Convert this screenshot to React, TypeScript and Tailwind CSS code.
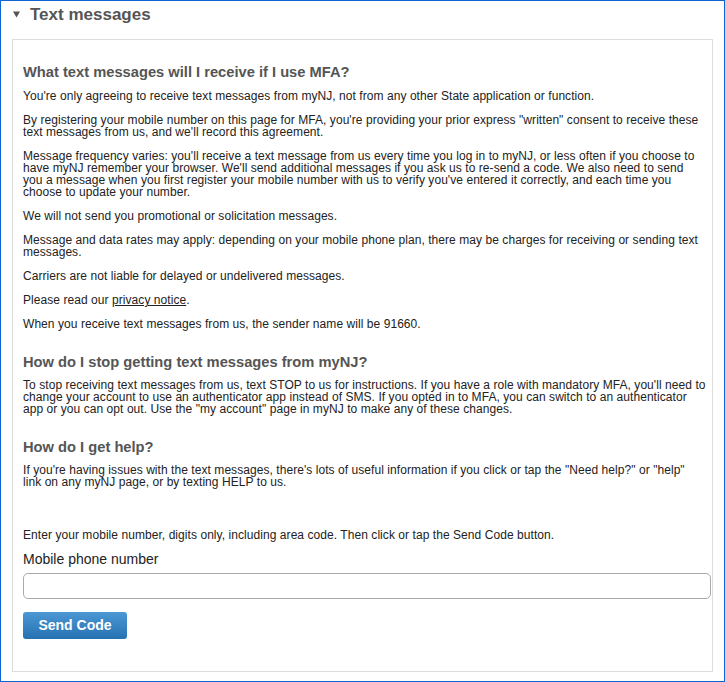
export default function App() {
    const para = 'mb-[12px] text-[12px] leading-[12px] tracking-[0.06px] text-[#222]';
    const heading = 'text-[14.7px] leading-[18px] font-bold text-[#555]';

    return (
        <div
            className="w-[725px] h-[682px] border border-[#0b63d4] bg-white"
            style={{ fontFamily: '"Liberation Sans", Arial, sans-serif' }}
        >
            {/* Section title */}
            <div className="flex items-center h-[27px] pl-[12px] pt-[1px]">
                <svg width="7" height="7" viewBox="0 0 7 7" className="mr-[10px] mb-[2px]">
                    <path d="M0 0.5 L7 0.5 L3.5 6.5 Z" fill="#555" />
                </svg>
                <h2 className="text-[17px] font-bold text-[#555]">Text messages</h2>
            </div>

            {/* Content box */}
            <div className="mx-[11px] mt-[11px] border border-[#ddd] pl-[10px] pr-[6px] pt-[23px] pb-[32px]">
                <h3 className={`${heading} mb-[9px]`}>What text messages will I receive if I use MFA?</h3>
                <p className={para}>
                    You're only agreeing to receive text messages from myNJ, not from any other State application or function.
                </p>
                <p className={para}>
                    By registering your mobile number on this page for MFA, you're providing your prior express "written" consent to receive these text messages from us, and we'll record this agreement.
                </p>
                <p className={para}>
                    Message frequency varies: you'll receive a text message from us every time you log in to myNJ, or less often if you choose to have myNJ remember your browser. We'll send additional messages if you ask us to re-send a code. We also need to send you a message when you first register your mobile number with us to verify you've entered it correctly, and each time you choose to update your number.
                </p>
                <p className={para}>We will not send you promotional or solicitation messages.</p>
                <p className={para}>
                    Message and data rates may apply: depending on your mobile phone plan, there may be charges for receiving or sending text messages.
                </p>
                <p className={para}>Carriers are not liable for delayed or undelivered messages.</p>
                <p className={para}>
                    Please read our <a className="underline text-[#222]">privacy notice</a>.
                </p>
                <p className={para}>When you receive text messages from us, the sender name will be 91660.</p>

                <h3 className={`${heading} mt-[23px] mb-[8px]`}>How do I stop getting text messages from myNJ?</h3>
                <p className={para}>
                    To stop receiving text messages from us, text STOP to us for instructions. If you have a role with mandatory MFA, you'll need to change your account to use an authenticator app instead of SMS. If you opted in to MFA, you can switch to an authenticator app or you can opt out. Use the "my account" page in myNJ to make any of these changes.
                </p>

                <h3 className={`${heading} mt-[23px] mb-[8px]`}>How do I get help?</h3>
                <p className={para}>
                    If you're having issues with the text messages, there's lots of useful information if you click or tap the "Need help?" or "help" link on any myNJ page, or by texting HELP to us.
                </p>

                {/* Form */}
                <p className="mt-[41px] text-[12px] leading-[12px] tracking-[0.06px] text-[#222]">
                    Enter your mobile number, digits only, including area code. Then click or tap the Send Code button.
                </p>
                <label className="block mt-[9px] text-[14px] leading-[18px] text-[#222]">Mobile phone number</label>
                <input
                    type="text"
                    className="block mt-[5px] w-[688px] h-[26px] rounded-[5px] border border-[#aaa] bg-white px-2 text-[14px] outline-none"
                />
                <button className="mt-[13px] h-[27px] w-[104px] rounded-[3px] bg-gradient-to-b from-[#4b98d4] to-[#2671b2] text-[14px] font-bold text-white">
                    Send Code
                </button>
            </div>
        </div>
    );
}
